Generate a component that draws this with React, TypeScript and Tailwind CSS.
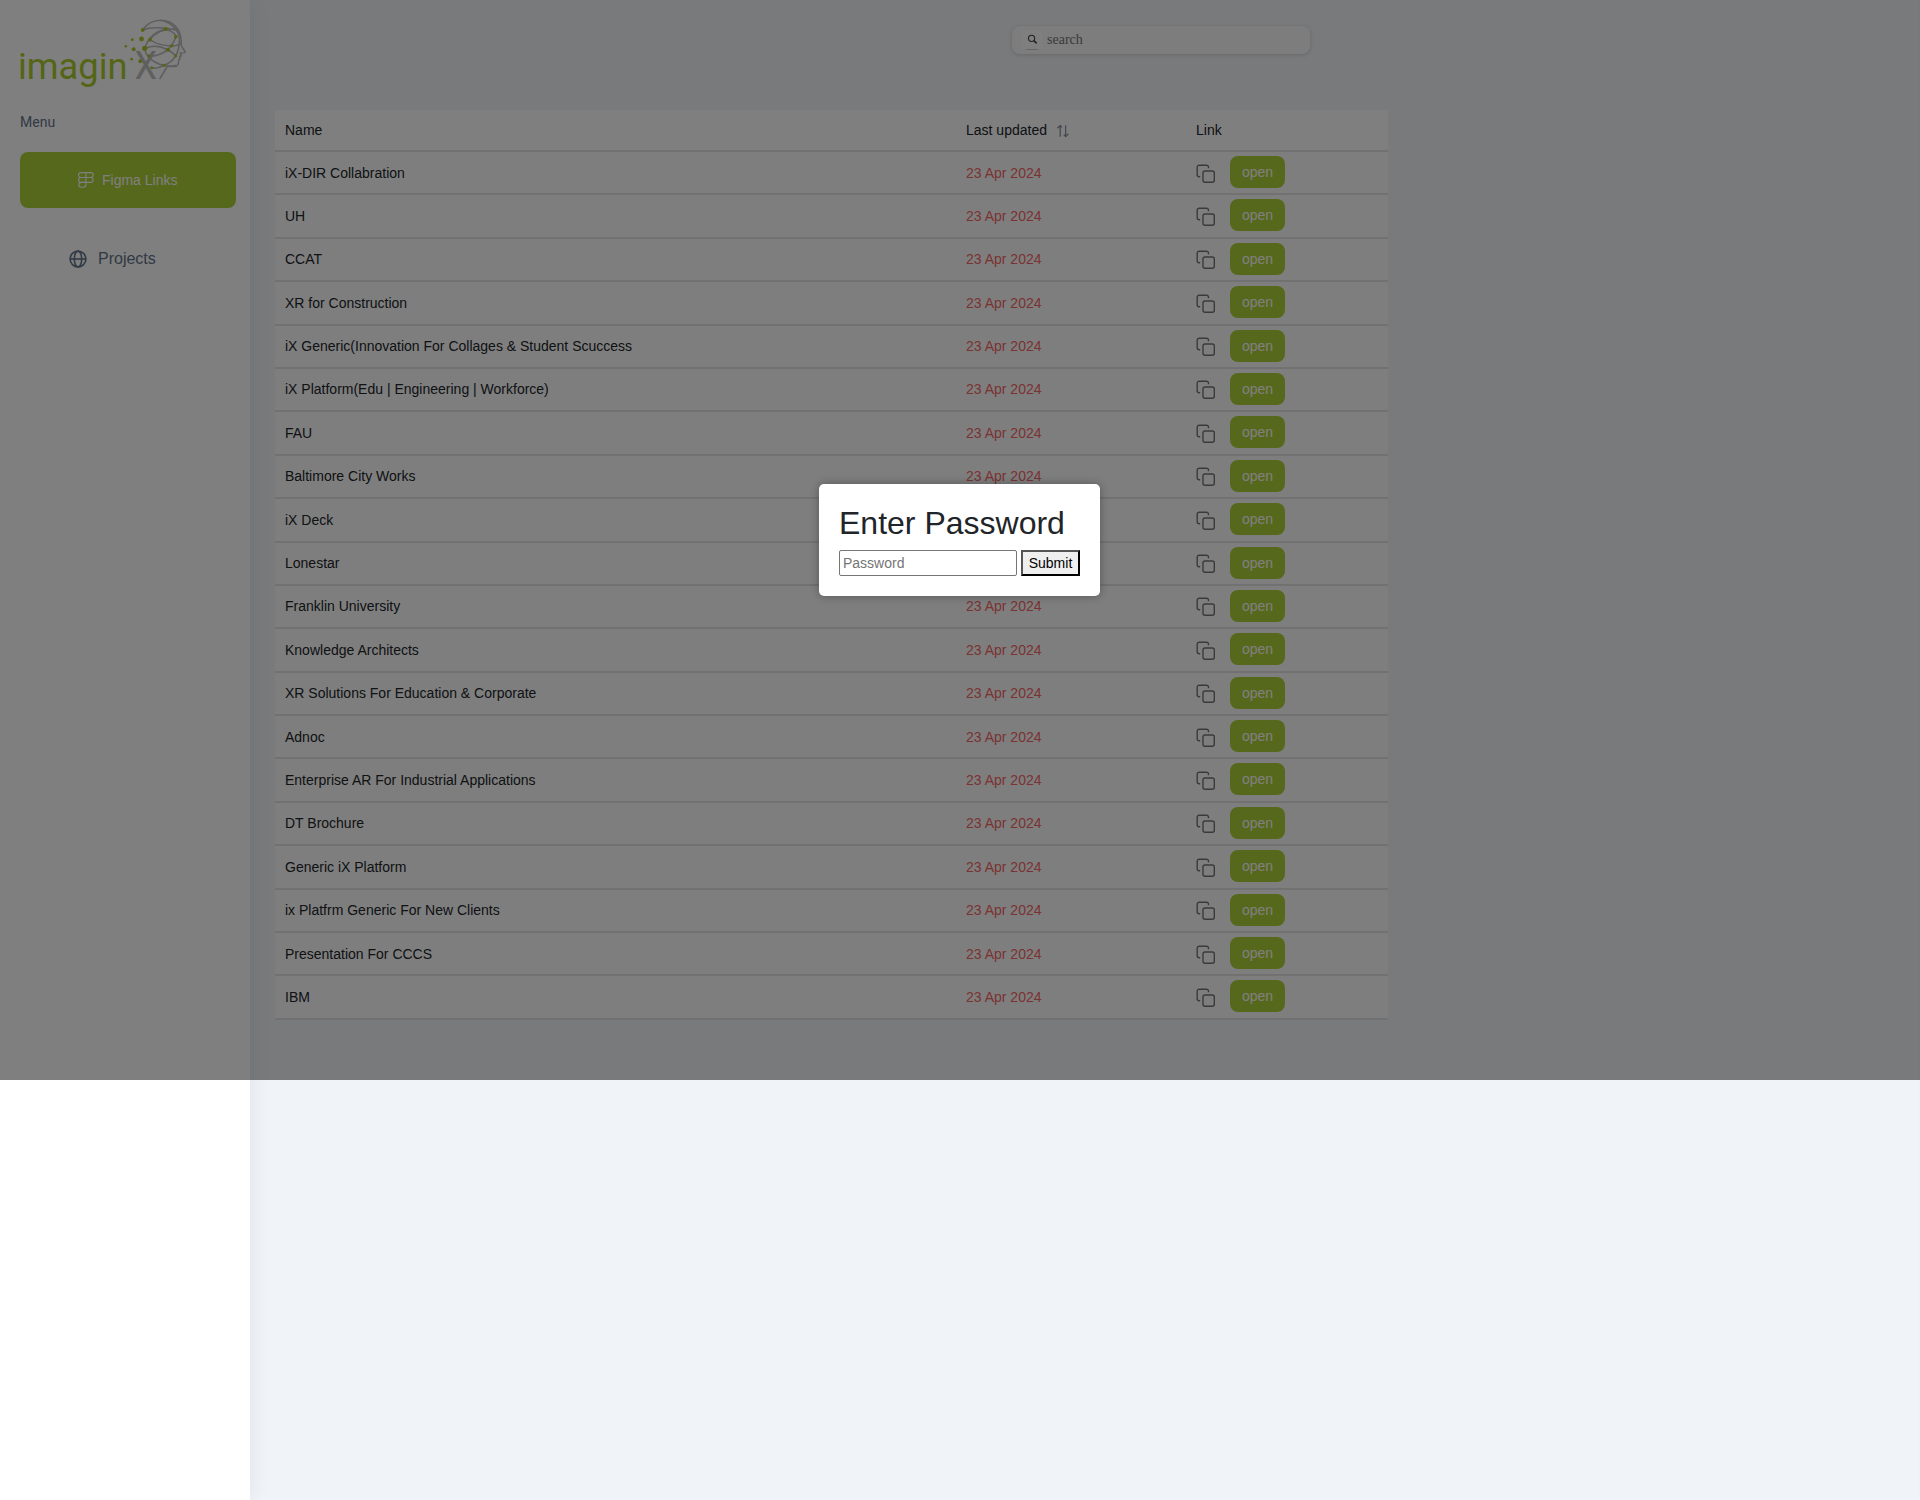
import React from "react";

const names = [
  "iX-DIR Collabration",
  "UH",
  "CCAT",
  "XR for Construction",
  "iX Generic(Innovation For Collages & Student Scuccess",
  "iX Platform(Edu | Engineering | Workforce)",
  "FAU",
  "Baltimore City Works",
  "iX Deck",
  "Lonestar",
  "Franklin University",
  "Knowledge Architects",
  "XR Solutions For Education & Corporate",
  "Adnoc",
  "Enterprise AR For Industrial Applications",
  "DT Brochure",
  "Generic iX Platform",
  "ix Platfrm Generic For New Clients",
  "Presentation For CCCS",
  "IBM",
];

const dots: [number, number, number][] = [
  [142.7, 30, 1.9],
  [165.7, 29, 2.1],
  [175.8, 36.7, 1.8],
  [171.8, 45.7, 1.7],
  [168, 49.8, 2],
  [150, 39.7, 1.9],
  [141.5, 39, 2.4],
  [132.3, 39.7, 1.4],
  [125.8, 46.3, 1.3],
  [133.7, 49.3, 2],
  [144.7, 48.3, 2.6],
  [131.6, 59.2, 1.4],
  [140.3, 61.3, 2],
  [149, 56, 1.7],
  [151.7, 67.7, 1.5],
  [163.7, 65.3, 1.6],
  [175.7, 55.7, 1.5],
];

function Logo() {
  return (
    <svg width="170" height="72" viewBox="20 18 170 72" className="block overflow-visible">
      <text x="18" y="79" fontSize="37.500" textLength="109.500" lengthAdjust="spacingAndGlyphs" fill="#a8cb2d" fontFamily='Roboto, sans-serif'>
        imagin
      </text>
      <g fill="none" stroke="#bebebe" strokeWidth="1.6" strokeLinejoin="round" strokeLinecap="round">
        <path d="M142.5 30C147 23.500 153 20.300 161 20.300c12 0 19.500 8.700 20.200 20.500.1 2.700-.4 4 .5 5.700l3.300 5c.4.8 0 1.100-.8 1.200l-3.700.3c-.8.4-.3 1.200 1 2.500l-2 1.300.6 1.800-1.300 1.400c-.2 4.500-.8 6.500-3.600 6.500h-8L160 78.500" />
        <path d="M143 30c7-3.500 24-2.500 33 0M150 39.500c6-8 14-11 26-10.500" />
        <path d="M161 20.500c10 1.500 18.500 10 18.500 19 0 12-5 22-15.800 26" />
        <path d="M165.500 29c6 2 10 5 11 8M165.500 29c-8 2-17 7-20.500 19" />
        <path d="M150 39.500c5 4 11 6 22 6.500 4 0 7-1 9-3" />
        <path d="M145 48.500c8-3.500 16-2.500 23 1.500 4 2 6 4 8 6" />
        <path d="M145 48.500c0 6 6 14 19 17 4 1 8 .8 12 0" />
        <path d="M176 36.500c-3 9-10 19-27 20" />
        <path d="M152 68c4 .5 9-1 12-2.800" />
      </g>
      <text x="134.500" y="79" fontSize="38" textLength="22.500" lengthAdjust="spacingAndGlyphs" fill="#bebebe" fontFamily="Roboto, sans-serif">
        X
      </text>
      {dots.map(([x, y, r]) => (
        <circle key={`${x}-${y}`} cx={x} cy={y} r={r} fill="#a8cb2d" />
      ))}
    </svg>
  );
}

function FigmaIcon() {
  return (
    <svg width="16" height="16" viewBox="0 0 16 16" fill="none" stroke="#fff" strokeWidth="1.1">
      <rect x=".6" y=".6" width="14.600" height="4.900" rx="2.450" />
      <rect x=".6" y="5.500" width="14.600" height="4.900" rx="2.450" />
      <path d="M7.900.6V12.600a2.700 2.700 0 0 1-2.700 2.700H3.300a2.450 2.450 0 0 1 0-4.900h4.600" />
    </svg>
  );
}

function GlobeIcon() {
  return (
    <svg width="18" height="18" viewBox="0 0 18 18" fill="none" stroke="#64748b" strokeWidth="1.6">
      <circle cx="9" cy="9" r="7.900" />
      <ellipse cx="9" cy="9" rx="3.700" ry="7.900" />
      <path d="M1 9h16" />
    </svg>
  );
}

function SortIcon() {
  return (
    <svg width="14" height="14" viewBox="0 0 14 14" fill="none" stroke="#8a94a6" strokeWidth="1.3">
      <path d="M4.200 12.700V1.500M1.400 4.300l2.800-2.800 1.900 1.900M9.600 1.300v11.200M7.700 10.600l1.900 1.900 2.800-2.800" />
    </svg>
  );
}

function CopyIcon() {
  return (
    <svg width="20" height="20" viewBox="0 0 20 20" fill="none" stroke="#757575" strokeWidth="1.400">
      <rect x="7" y="7" width="11.300" height="11.300" rx="2" />
      <path d="M12.500 4.300V3.200a2 2 0 0 0-2-2H3.200a2 2 0 0 0-2 2v7.500a2 2 0 0 0 2 2h1" />
    </svg>
  );
}

function Sidebar() {
  return (
    <aside className="flex h-[1500px] w-[250px] shrink-0 flex-col bg-white px-5 pt-[18px] shadow-[0_0_20px_rgba(0,0,0,0.08)]">
      <Logo />
      <div className="mt-[22px] h-5 font-['Roboto',sans-serif] text-sm leading-5 text-[#64748b]">Menu</div>
      <a className="mt-5 flex h-14 w-[216px] items-center rounded-lg bg-[#acd137] pl-[58px] text-sm text-white">
        <FigmaIcon />
        <span className="ml-2">Figma Links</span>
      </a>
      <a className="mt-[37px] flex h-7 items-center pl-[49px] text-base text-[#64748b]">
        <GlobeIcon />
        <span className="ml-[11px]">Projects</span>
      </a>
    </aside>
  );
}

function SearchBox() {
  return (
    <div className="ml-[737px] flex h-7 w-[298px] items-center rounded-lg bg-[#fafafa] pl-2.5 shadow-[0_1px_4px_rgba(0,0,0,0.15)]">
      <div className="flex size-5 flex-col items-center bg-white pt-1">
        <svg width="11" height="11" viewBox="0 0 12 12" fill="none" stroke="#444">
          <circle cx="5" cy="4.700" r="3.400" strokeWidth="1.200" />
          <path d="M7.500 7.200l3 3" strokeWidth="1.700" />
        </svg>
        <div className="mt-1 h-px w-3 bg-[#ccc]" />
      </div>
      <span className="ml-[5px] font-['Liberation_Serif',serif] text-sm text-[#757575]">search</span>
    </div>
  );
}

const columns = "grid grid-cols-[681px_230px_1fr] border-b-2 border-[#e2e2e2] pl-2.5";

function LinksTable() {
  return (
    <div className="mt-14 w-[1113px] bg-[#fdfdfd] text-sm leading-5 text-[#212529]">
      <div className={`${columns} h-[42px] items-center bg-white`}>
        <span>Name</span>
        <span className="flex items-center">
          Last updated
          <span className="ml-[9px] mt-0.5">
            <SortIcon />
          </span>
        </span>
        <span>Link</span>
      </div>
      {names.map((name) => (
        <div key={name} className={`${columns} h-[43.4px] items-center pb-[0.36px]`}>
          <span>{name}</span>
          <span className="text-[#f56565]">23 Apr 2024</span>
          <span className="flex items-center">
            <span className="mt-0.5">
              <CopyIcon />
            </span>
            <button className="mb-px ml-3.5 h-8 w-[55px] rounded-lg bg-[#acd137] text-sm text-white">open</button>
          </span>
        </div>
      ))}
    </div>
  );
}

function PasswordDialog() {
  return (
    <div className="absolute left-0 top-0 flex h-[1080px] w-[1920px] items-center justify-center bg-black/50">
      <div className="mr-px w-[281px] rounded-[5px] bg-white p-5 shadow-[0_0_10px_rgba(0,0,0,0.3)]">
        <h2 className="mb-2 whitespace-nowrap text-[32px] leading-[38.4px] text-[#212529]">Enter Password</h2>
        <div className="flex h-[26px] items-stretch gap-1">
          <input
            placeholder="Password"
            className="w-[178px] rounded-[2px] border border-[#767676] bg-white px-[3px] text-sm placeholder:text-[#757575]"
          />
          <button className="w-[59px] border-2 border-t-[#555] border-r-black border-b-black border-l-[#555] bg-[#efefef] text-sm leading-5 text-black">
            Submit
          </button>
        </div>
      </div>
    </div>
  );
}

export default function App() {
  return (
    <div className="relative h-[1500px] w-[1920px] overflow-hidden bg-[#f1f1f1] font-['Liberation_Sans',Arial,sans-serif]">
      <div className="flex h-full w-[1919px] bg-[#f0f4f8]">
        <Sidebar />
        <main className="flex-1 pl-[25px] pt-[26px]">
          <SearchBox />
          <LinksTable />
        </main>
      </div>
      <PasswordDialog />
    </div>
  );
}
